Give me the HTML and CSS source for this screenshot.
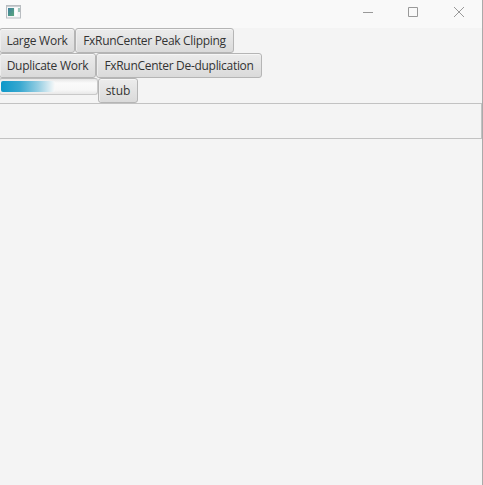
FILE: index.html
```html
<!DOCTYPE html>
<html lang="en">
<head>
<meta charset="utf-8">
<title>FxRunCenter</title>
<link rel="stylesheet" href="styles.css">
</head>
<body>
<div class="window">
  <header class="titlebar">
    <svg class="app-icon" width="15" height="14" viewBox="0 0 15 14">
      <defs><linearGradient id="pane" x1="0" y1="0" x2="1" y2="1"><stop offset="0" stop-color="#3d7f9e"/><stop offset="1" stop-color="#5aa77c"/></linearGradient></defs>
      <rect x=".5" y=".5" width="14" height="12.5" fill="#f5f6f7" stroke="#b9bdc1"/>
      <path d="M1 1.5h13" stroke="#c9cdd0"/>
      <rect x="2" y="3" width="6" height="8" fill="url(#pane)"/>
      <rect x="12" y="3" width="2" height="4" fill="#9fc7bd"/>
      <path d="M9 3h2v8h-2z" fill="#fff"/>
    </svg>
    <svg class="controls" width="102" height="12" viewBox="0 0 102 12" fill="none" stroke="#999">
      <path d="M0 6.5h10M45.5 1.5h9v9h-9z"/>
      <path d="M91 1l10 10M101 1l-10 10"/>
    </svg>
  </header>
  <main class="content">
    <div class="row">
      <button class="btn large">Large Work</button>
      <button class="btn peak">FxRunCenter Peak Clipping</button>
    </div>
    <div class="row">
      <button class="btn duplicate">Duplicate Work</button>
      <button class="btn dedup">FxRunCenter De-duplication</button>
    </div>
    <div class="row">
      <div class="progress"><div class="bar"></div></div>
      <button class="btn stub">stub</button>
    </div>
    <div class="panel"></div>
  </main>
</div>
</body>
</html>
```

FILE: styles.css
```css
* { box-sizing: border-box; }
body { margin: 0; overflow: hidden; font-family: "Open Sans", "Noto Sans", sans-serif; font-size: 12px; }
.window { width: 483px; height: 485px; background: #f4f4f4; border-right: 1px solid #aaa; overflow: hidden; }
.titlebar { height: 28px; padding: 0 17px 0 6px; display: flex; justify-content: space-between; background: #f9f9f9; }
.app-icon { margin-top: 5px; }
.controls { margin-top: 6px; }
.row { display: flex; align-items: flex-start; height: 25px; margin-left: -1px; }
.btn {
  height: 25px; padding: 1px 0 0; border: 1px solid #b5b5b5; border-radius: 3px;
  background: linear-gradient(#ececec, #dadada); box-shadow: inset 0 1px #f6f6f6, inset 1px 0 #ededed;
  color: #333; font: inherit; line-height: 22px; white-space: nowrap;
}
.large { width: 76px; letter-spacing: -0.25px; }
.peak { width: 159px; letter-spacing: -0.32px; }
.duplicate { width: 97px; letter-spacing: -0.28px; }
.dedup { width: 166px; letter-spacing: -0.3px; }
.stub { width: 40px; }
.progress {
  width: 99px; height: 17px; padding: 2px 1px; border: 1px solid #c9c9c9; border-top-color: #bbb;
  border-radius: 3px; background: linear-gradient(#e6e6e6, #fafafa 4px, #f7f7f7 11px, #e8e8e8);
}
.bar { width: 54px; height: 11px; border-radius: 2px; background: linear-gradient(90deg, #0d98c9, #39a8d0 35%, #98cfe3 70%, #f9f9f9); }
.panel { height: 36px; border: 1px solid #c2c2c2; border-left: 0; }
```
